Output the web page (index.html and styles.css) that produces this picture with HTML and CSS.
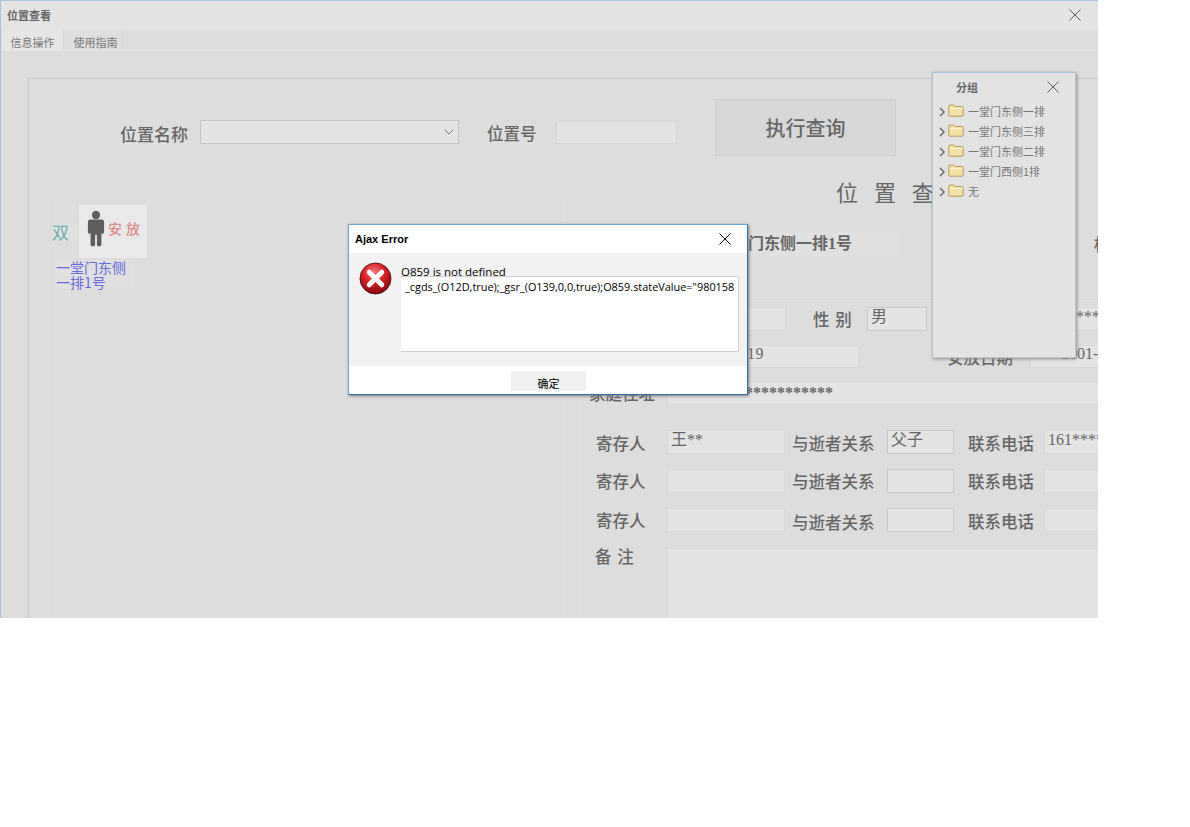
FILE: index.html
```html
<!DOCTYPE html>
<html lang="zh-CN">
<head>
<meta charset="utf-8">
<title>位置查看</title>
<link rel="stylesheet" href="styles.css">
</head>
<body>
<div class="stage">
  <div class="window">
    <header class="titlebar">
      <span class="title-text">位置查看</span>
      <svg class="close" viewBox="0 0 12 12"><path d="M.5.5l11 11M11.5.5l-11 11"/></svg>
    </header>
    <nav class="tabs">
      <span class="tab tab-active">信息操作</span>
      <span class="tab">使用指南</span>
    </nav>
    <main class="body">
      <section class="box">
        <div class="search">
          <label class="search-label">位置名称</label>
          <div class="select">
            <svg class="caret" viewBox="0 0 10 6"><path d="M.5.5L5 5 9.5.5"/></svg>
          </div>
          <label class="search-label search-label-no">位置号</label>
          <div class="search-input"></div>
          <button class="run">执行查询</button>
        </div>
        <div class="split">
          <aside class="left">
            <div class="slot">
              <span class="slot-mark">双</span>
              <div class="tile">
                <svg class="person" viewBox="0 0 20 40"><circle cx="10" cy="5" r="4.6"/><path d="M4 10h12q3 0 3 3v11q0 2-2 2l-1-1v13q0 2-2.500 2T11 38V27h-2v11q0 2-2.500 2T4 38V25l-1 1q-2 0-2-2V13q0-3 3-3z"/></svg>
                <span class="tile-text">安放</span>
              </div>
            </div>
            <div class="slot-name">一堂门东侧<br>一排1号</div>
          </aside>
          <div class="right">
            <h1 class="heading">位 置 查 询</h1>
            <div class="row row-name">
              <span class="label label-name">位置名称</span>
              <div class="name-value">一堂门东侧一排1号</div>
              <span class="label label-far">标识</span>
            </div>
            <div class="pane">
              <div class="row row-a">
                <span class="label label-l">姓 名</span>
                <div class="field f-name"></div>
                <span class="label label-sex">性 别</span>
                <div class="field strong f-sex">男</div>
                <span class="label label-id">身份证号</span>
                <div class="field f-id">*********</div>
              </div>
              <div class="row row-b">
                <span class="label label-l">逝世日期</span>
                <div class="field f-date"><span class="date-text">1955-01-19</span></div>
                <span class="label label-put">安放日期</span>
                <div class="field f-put">2001-</div>
              </div>
              <div class="row row-c">
                <span class="label label-l">家庭住址</span>
                <div class="field f-addr">********************</div>
              </div>
              <div class="row row-p row-p1">
                <span class="label label-p">寄存人</span>
                <div class="field f-p">王**</div>
                <span class="label label-r">与逝者关系</span>
                <div class="field strong f-r">父子</div>
                <span class="label label-t">联系电话</span>
                <div class="field f-t">161*******</div>
              </div>
              <div class="row row-p row-p2">
                <span class="label label-p">寄存人</span>
                <div class="field f-p"></div>
                <span class="label label-r">与逝者关系</span>
                <div class="field strong f-r"></div>
                <span class="label label-t">联系电话</span>
                <div class="field f-t"></div>
              </div>
              <div class="row row-p row-p3">
                <span class="label label-p">寄存人</span>
                <div class="field f-p"></div>
                <span class="label label-r">与逝者关系</span>
                <div class="field strong f-r"></div>
                <span class="label label-t">联系电话</span>
                <div class="field f-t"></div>
              </div>
              <div class="row row-note">
                <span class="label label-note">备 注</span>
                <div class="field f-note"></div>
              </div>
            </div>
          </div>
        </div>
      </section>
    </main>
  </div>

  <div class="group">
    <div class="group-head">
      <span class="group-title">分组</span>
      <svg class="close" viewBox="0 0 12 12"><path d="M.5.5l11 11M11.5.5l-11 11"/></svg>
    </div>
    <ul class="tree">
      <li class="node"><svg class="chev" viewBox="0 0 7 10"><path d="M1 1l4 4-4 4"/></svg><svg class="folder" viewBox="0 0 16 13"><use href="#folder"/></svg>一堂门东侧一排</li>
      <li class="node"><svg class="chev" viewBox="0 0 7 10"><path d="M1 1l4 4-4 4"/></svg><svg class="folder" viewBox="0 0 16 13"><use href="#folder"/></svg>一堂门东侧三排</li>
      <li class="node"><svg class="chev" viewBox="0 0 7 10"><path d="M1 1l4 4-4 4"/></svg><svg class="folder" viewBox="0 0 16 13"><use href="#folder"/></svg>一堂门东侧二排</li>
      <li class="node"><svg class="chev" viewBox="0 0 7 10"><path d="M1 1l4 4-4 4"/></svg><svg class="folder" viewBox="0 0 16 13"><use href="#folder"/></svg>一堂门西侧1排</li>
      <li class="node"><svg class="chev" viewBox="0 0 7 10"><path d="M1 1l4 4-4 4"/></svg><svg class="folder" viewBox="0 0 16 13"><use href="#folder"/></svg>无</li>
    </ul>
  </div>

  <div class="dialog">
    <div class="dialog-head">
      <span class="dialog-title">Ajax Error</span>
      <svg class="close close-dark" viewBox="0 0 12 12"><path d="M.5.5l11 11M11.5.5l-11 11"/></svg>
    </div>
    <div class="dialog-body">
      <svg class="err" viewBox="0 0 34 34">
        <defs>
          <radialGradient id="red" cx="45%" cy="30%" r="75%">
            <stop offset="0" stop-color="#f47a7a"/>
            <stop offset=".45" stop-color="#dc1f26"/>
            <stop offset="1" stop-color="#7a0508"/>
          </radialGradient>
        </defs>
        <circle cx="17" cy="17" r="16" fill="url(#red)" stroke="#3a0a0a" stroke-width=".8"/>
        <path d="M10.500 10.500l13 13M23.500 10.500l-13 13" stroke="#fff" stroke-width="5" stroke-linecap="round" fill="none"/>
      </svg>
      <div class="dialog-main">
        <div class="err-msg">O859 is not defined</div>
        <div class="err-detail">_cgds_(O12D,true);_gsr_(O139,0,0,true);O859.stateValue="980158</div>
      </div>
    </div>
    <div class="dialog-foot"><button class="ok">确定</button></div>
  </div>
</div>

<svg class="defs" width="0" height="0">
  <symbol id="folder" viewBox="0 0 16 13">
    <path d="M.8 11V2.200Q.8 1 2 1h3.500l1.500 1.500h7Q15.200 2.500 15.200 3.700V11q0 1.200-1.200 1.200H2Q.8 12.200.8 11z" fill="#f3e2a6" stroke="#b59a5a"/>
    <path d="M1.500 4.500h13" stroke="#fff6d6" fill="none"/>
  </symbol>
</svg>
</body>
</html>
```
FILE: styles.css
```css
* { box-sizing: border-box; }
html, body { margin: 0; padding: 0; background: #fff; }
body { width: 1190px; height: 827px; overflow: hidden; font-family: "Liberation Serif", "Noto Sans CJK SC", serif; color: #666; }
.defs { position: absolute; }

.stage { position: relative; width: 1098px; height: 618px; overflow: hidden; background: #ddd; }
.window { width: 1098px; height: 618px; border-top: 1px solid #a7c4dc; border-left: 1px solid #a7c4dc; display: flex; flex-direction: column; }

.close { width: 12px; height: 12px; fill: none; stroke: #5c5c5c; stroke-width: 1; }
.close-dark { stroke: #000; }

.titlebar { height: 29px; flex: none; background: #e4e4e4; display: flex; align-items: center; justify-content: space-between; padding: 0 17px 1px 6px; }
.title-text { font: 700 11px "Noto Sans CJK SC", sans-serif; color: #666; }

.tabs { height: 21px; flex: none; display: flex; padding-left: 1px; background: #dedede; border-bottom: 1px solid #e6e6e6; }
.tab { width: 64px; text-align: center; font: 11px/24px "Noto Sans CJK SC", sans-serif; color: #777; border-right: 1px solid #d9d9d9; }
.tab-active { width: 62px; background: #e6e6e6; }

.body { flex: 1; min-height: 0; padding: 27px 0 0 27px; overflow: hidden; }
.box { width: 1100px; height: 560px; border: 1px solid #c8c8c8; }

.search { height: 92px; display: flex; align-items: flex-start; padding: 20px 0 0 91px; }
.search-label { width: 80px; margin-top: 23px; font: 500 17px/24px "Noto Sans CJK SC", sans-serif; color: #666; white-space: nowrap; }
.search-label-no { width: 69px; margin: 22px 0 0 28px; font-size: 16.500px; }
.select { width: 259px; height: 24px; margin-top: 21px; border: 1px solid #c4c4c4; background: #e4e4e4; display: flex; align-items: center; justify-content: flex-end; padding-right: 4px; }
.caret { width: 10px; height: 6px; fill: none; stroke: #777; }
.search-input { width: 121px; height: 23px; margin-top: 22px; border: 1px solid #d6d6d6; background: #e4e4e4; }
.run { width: 181px; height: 57px; margin-left: 38px; border: 1px solid #cfcfcf; background: #d7d7d7; color: #666; font: 500 20px/1 "Noto Sans CJK SC", sans-serif; }

.split { display: flex; height: 440px; }

.left { width: 517px; height: 420px; flex: none; margin: 28px 14px 0 19px; padding: 5px 0 0 4px; border: 1px solid #dfdfdf; border-bottom: 0; }
.slot { display: flex; align-items: flex-start; }
.slot-mark { width: 26px; height: 18px; margin-top: 17px; background: #e0e0e0; font: 17px/20px "Noto Sans CJK SC", sans-serif; color: #6bb0a8; text-indent: -1px; }
.tile { width: 68px; height: 53px; background: #e9e9e9; display: flex; align-items: center; gap: 3px; padding-left: 8px; }
.person { width: 18px; height: 39px; margin-top: -6px; fill: #5e5e5e; filter: blur(.4px); }
.tile-text { margin-top: -7px; font: 500 14px/1 "Noto Sans CJK SC", sans-serif; letter-spacing: 4px; color: #e08a8a; white-space: nowrap; }
.slot-name { width: 79px; height: 30px; margin: 2px 0 0 3px; background: #e0e0e0; font: 14px/15px "Noto Sans CJK SC", sans-serif; color: #6a6ae0; white-space: nowrap; }

.right { width: 520px; flex: none; }
.heading { margin: 5px 0 0 257px; height: 30px; font: 400 22px/30px "Noto Sans CJK SC", sans-serif; color: #666; white-space: pre; word-spacing: 11px; }

.row { display: flex; align-items: flex-start; white-space: nowrap; }
.label { font: 500 16.500px/24px "Noto Sans CJK SC", sans-serif; color: #666; flex: none; }
.field { flex: none; height: 24px; background: #e4e4e4; border: 1px solid #d8d8d8; font: 16px/17px "Liberation Serif", "Noto Sans CJK SC", serif; color: #666; padding-left: 3px; overflow: hidden; }
.strong { border-color: #c8c8c8; }

.row-name { margin-top: 26px; height: 24px; padding-left: 88px; }
.label-name { width: 49px; overflow: hidden; }
.name-value { flex: none; width: 182px; height: 24px; background: #e0e0e0; font: 700 16px/24px "Liberation Serif", "Noto Sans CJK SC", serif; }
.label-far { margin-left: 196px; }

.pane { margin-top: 43px; height: 340px; width: 520px; border-top: 1px solid #d6d6d6; padding-top: 1px; background: linear-gradient(#e3e3e3, #e3e3e3) no-repeat 0 0 / 100% 1px; box-shadow: inset 1px 0 #e1e1e1; }

.row-a { margin-top: 6px; }
.label-l { width: 88px; padding-left: 10px; }
.f-name { width: 119px; }
.label-sex { width: 54px; margin-left: 27px; word-spacing: 2px; }
.f-sex { width: 60px; }
.label-id { margin-left: 20px; width: 68px; }
.f-id { width: 100px; margin-left: 60px; padding-left: 0; }

.row-b { margin-top: 14px; height: 23px; }
.f-date { width: 192px; height: 23px; line-height: 16px; padding-left: 0; }
.date-text { display: inline-block; width: 96px; text-align: right; letter-spacing: .5px; }
.label-put { width: 65px; margin-left: 88px; }
.f-put { width: 100px; height: 23px; margin-left: 18px; padding-left: 30px; line-height: 16px; }

.row-c { margin-top: 13px; }
.f-addr { width: 440px; padding-left: 5px; line-height: 22px; font-weight: 700; }

.row-p { height: 24px; }
.row-p1 { margin-top: 25px; }
.row-p2 { margin-top: 15px; }
.row-p3 { margin-top: 15px; }
.label-p { width: 88px; padding-left: 17px; line-height: 24px; }
.f-p { width: 118px; }
.label-r { width: 95px; margin-left: 7px; line-height: 24px; }
.f-r { width: 67px; }
.label-t { width: 76px; margin-left: 14px; line-height: 24px; }
.f-t { width: 100px; padding-left: 3px; }
.row-p1 .label { line-height: 26px; }
.row-p3 .label-r { line-height: 28px; }
.row-p3 .label-t { line-height: 26px; }

.row-note { margin-top: 16px; }
.label-note { width: 88px; padding-left: 16px; line-height: 16px; word-spacing: 2px; }
.f-note { width: 440px; height: 120px; }

.group { position: absolute; left: 932px; top: 72px; width: 144px; height: 286px; background: #e3e3e3; border-top: 1px solid #a7c4dc; border-left: 1px solid #a7c4dc; border-right: 1px solid #c4c4c4; border-bottom: 1px solid #c4c4c4; box-shadow: 1px 1px 3px #8a8a8a; }
.group-head { height: 28px; display: flex; align-items: center; justify-content: space-between; padding: 0 16px 1px 23px; }
.group-title { font: 700 11px "Noto Sans CJK SC", sans-serif; color: #666; }
.tree { list-style: none; margin: 0; padding: 0 0 0 6px; }
.node { height: 20px; display: flex; align-items: center; font: 11px/20px "Noto Sans CJK SC", sans-serif; color: #777; }
.chev { width: 7px; height: 10px; margin: 1px 2px 0 0; fill: none; stroke: #6c6c6c; stroke-width: 1.500; }
.folder { width: 16px; height: 13px; margin: -2px 4px 0 0; }

.dialog { position: absolute; left: 348px; top: 224px; width: 400px; height: 171px; background: #fff; border: 1px solid #6da4d1; border-bottom-color: #2f6ea5; border-right-color: #2f6ea5; box-shadow: 1px 1px 3px #7a7a7a; display: flex; flex-direction: column; }
.dialog-head { height: 28px; flex: none; display: flex; align-items: center; justify-content: space-between; padding: 0 16px 0 6px; }
.dialog-title { font: 700 11px "Liberation Sans", sans-serif; color: #000; }
.dialog-body { flex: none; height: 113px; background: #f2f2f2; display: flex; padding: 10px 8px 0 10px; }
.err { width: 33px; height: 33px; flex: none; margin-top: -1px; }
.dialog-main { margin-left: 9px; flex: 1; }
.err-msg { height: 13px; font: 11.500px/18px "Open Sans", sans-serif; color: #000; }
.err-detail { height: 76px; background: #fff; border: 1px solid #cfcfcf; border-width: 1px 1px 1px 0; padding: 3px 0 0 4px; font: 10.900px/14px "Open Sans", sans-serif; color: #000; white-space: nowrap; overflow: hidden; }
.dialog-foot { flex: 1; padding: 5px 0 0 162px; }
.ok { width: 75px; height: 20px; padding: 4px 0 0; border: 0; background: #f0f0f0; color: #000; font: 11px/1 "Noto Sans CJK SC", sans-serif; }
```
